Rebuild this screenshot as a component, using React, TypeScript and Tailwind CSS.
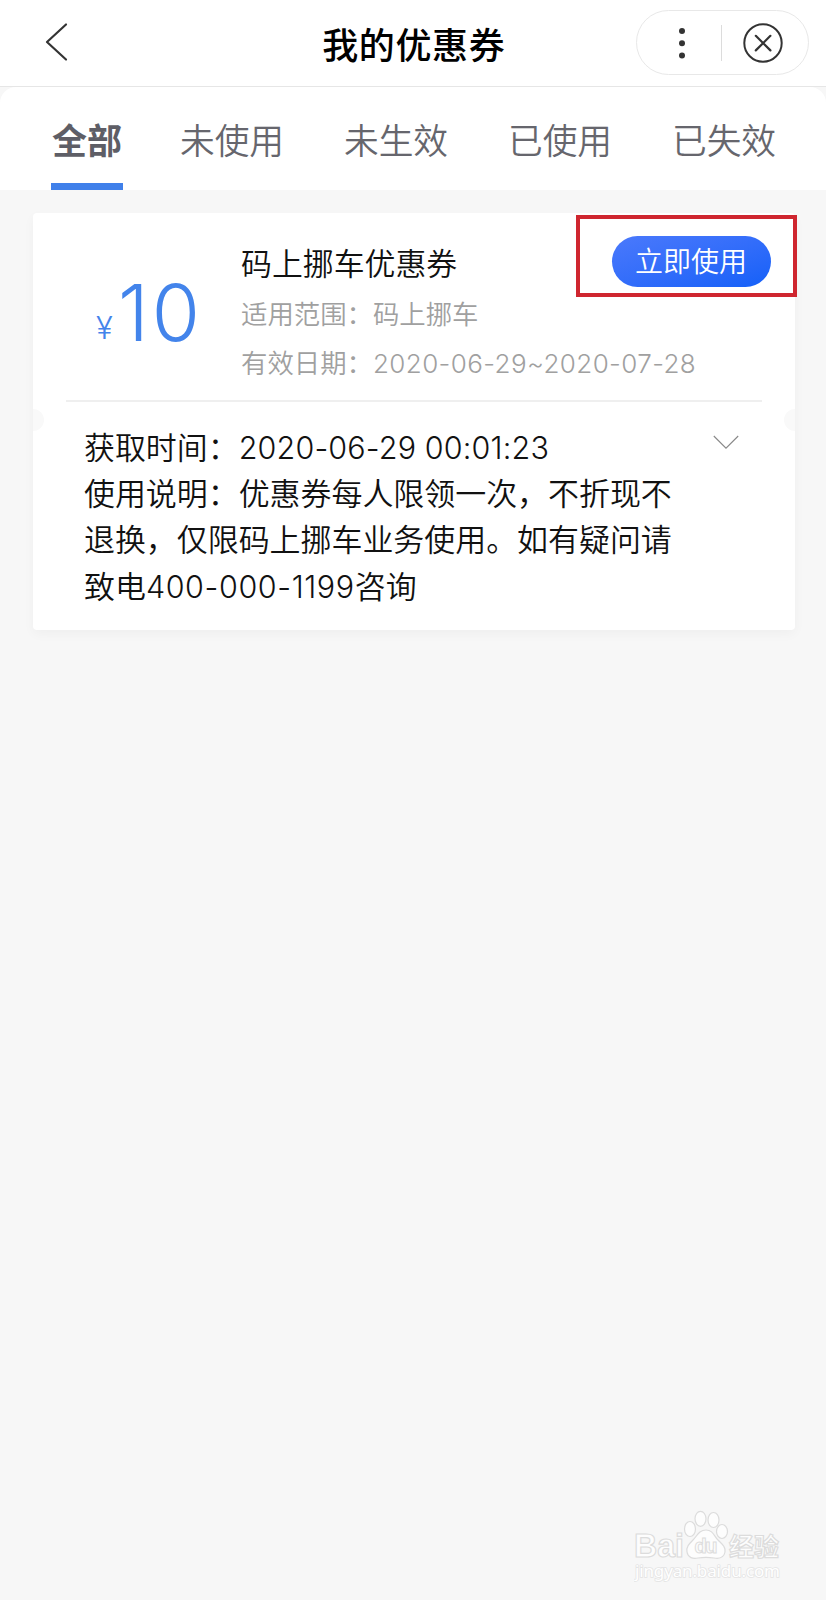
import React from "react";

const tabs = ["全部", "未使用", "未生效", "已使用", "已失效"];

function Latin({ children, className = "" }: { children: React.ReactNode; className?: string }) {
  return <span className={`font-['Inter','Noto_Sans_CJK_SC',sans-serif] ${className}`}>{children}</span>;
}

function Header() {
  return (
    <header className="grid h-[87px] grid-cols-[1fr_auto_1fr] items-center border-b border-[#e6e6e6] bg-white">
      <button aria-label="返回" className="ml-[45px] mb-[3px] w-6">
        <svg width="24" height="40" viewBox="0 0 24 40" fill="none" stroke="#333" strokeWidth="2.2" strokeLinecap="round" strokeLinejoin="round">
          <path d="M21 2.500 2 20 21 37.500" />
        </svg>
      </button>
      <h1 className="pl-[1.500px] text-[36px] font-medium leading-[44px] tracking-[0.600px] text-black">我的优惠券</h1>
      <div className="mb-[1px] mr-[17px] flex h-[65px] w-[173px] items-center justify-self-end rounded-full border border-[#e8e8e8]">
        <button aria-label="更多" className="ml-[39px] flex w-3 justify-center">
          <svg width="8" height="32" viewBox="0 0 8 32" fill="#333">
            <circle cx="4" cy="4" r="3" />
            <circle cx="4" cy="16.200" r="3" />
            <circle cx="4" cy="28.400" r="3" />
          </svg>
        </button>
        <div className="ml-[33px] h-9 w-px bg-[#dcdcdc]" />
        <button aria-label="关闭" className="ml-[20px]">
          <svg width="42" height="42" viewBox="0 0 42 42" fill="none" stroke="#333" strokeWidth="2" strokeLinecap="round">
            <circle cx="21" cy="21" r="18.700" />
            <path d="m13.800 13.800 14.600 14.600M28.400 13.800 13.800 28.400" strokeWidth="2.200" />
          </svg>
        </button>
      </div>
    </header>
  );
}

function Coupon() {
  return (
    <section className="relative ml-[33px] mt-[23px] h-[417px] w-[762px] rounded-[4px] bg-white shadow-[0_4px_12px_rgba(0,0,0,0.035)]">
      <div className="mx-[33px] flex h-[189px] border-b-2 border-[#efefef]">
        <div className="flex w-[142px] items-baseline pl-[30px] pt-[50px] text-[#4384eb]">
          <span className="relative top-[-2px] w-[22px] font-['Inter',sans-serif] text-[31px] font-light">¥</span>
          <Latin className="text-[78px] font-[350] leading-[100px] tracking-[3px]">10</Latin>
        </div>
        <div className="ml-[33px] pt-[26px] font-[350]">
          <h2 className="text-[30.900px] leading-[46px] text-[#111]">码上挪车优惠券</h2>
          <p className="mt-[3px] text-[26.400px] leading-[49px] text-[#a0a0a0]">适用范围：码上挪车</p>
          <p className="whitespace-nowrap text-[26.400px] leading-[49px] text-[#a0a0a0]">
            有效日期：<Latin className="text-[26px] font-[350] leading-none tracking-[0.400px]">2020-06-29~2020-07-28</Latin>
          </p>
        </div>
      </div>
      <div className="absolute right-[-2px] top-[2px] flex h-[82px] w-[221px] items-start justify-center border-4 border-[#cf262f] pl-[9px] pt-[17px]">
        <button className="h-[51px] w-[159px] rounded-full bg-linear-to-br from-[#4a79fc] to-[#1260f8] pb-[3px] text-[28px] font-[350] leading-[46px] text-white">立即使用</button>
      </div>
      <div className="absolute inset-x-0 top-[196px] flex h-[22px] justify-between overflow-hidden">
        <i className="h-[22px] w-[11px] rounded-r-full bg-[#f9f9f9]" />
        <i className="h-[22px] w-[11px] rounded-l-full bg-[#f9f9f9]" />
      </div>
      <div className="flex items-start pl-[51px] pt-[21px]">
        <div className="whitespace-nowrap text-[30.950px] font-[350] leading-[46.200px] text-[#111]">
          <p>获取时间：<Latin className="text-[30.500px] font-[350] leading-none tracking-[0.150px]">2020-06-29 00:01:23</Latin></p>
          <p>使用说明：优惠券每人限领一次，不折现不</p>
          <p>退换，仅限码上挪车业务使用。如有疑问请</p>
          <p>致电<Latin className="text-[30.500px] font-[350] leading-none tracking-[0.600px]">400-000-1199</Latin>咨询</p>
        </div>
        <svg className="ml-[41px] mt-[12px]" width="26" height="15" viewBox="0 0 26 15" fill="none" stroke="#888" strokeWidth="1.1">
          <path d="m.8 1 12.200 12.200L25.200 1" />
        </svg>
      </div>
    </section>
  );
}

function Watermark() {
  return (
    <svg className="absolute bottom-[10px] right-[12px]" width="180" height="80" viewBox="0 0 180 80" fill="#fdfdfd" stroke="#dcdcdc" strokeWidth="1.2">
      <text x="0" y="47" fontFamily="Liberation Sans, sans-serif" fontSize="34" fontWeight="700" textLength="50" lengthAdjust="spacingAndGlyphs">Bai</text>
      <ellipse cx="56" cy="19" rx="5.500" ry="7.500" />
      <ellipse cx="66.500" cy="8.800" rx="5.500" ry="7.500" />
      <ellipse cx="79.500" cy="10" rx="5.500" ry="7.500" />
      <ellipse cx="88" cy="21.500" rx="5.500" ry="7" />
      <path d="M72 20c-7 0-9 6-13 10-4 4-7 7-6 12 1 6 6 7 11 6 6-1 10-1 16 0 6 1 10-1 11-6 1-5-3-8-7-12-4-4-5-10-12-10Z" />
      <text x="60.500" y="43" fontFamily="Liberation Sans, sans-serif" fontSize="20" fontWeight="700" strokeWidth="1" textLength="23">du</text>
      <text x="95" y="45.500" fontFamily="Noto Sans CJK SC, sans-serif" fontSize="25" fontWeight="700">经验</text>
      <text x="1" y="67" fontFamily="Noto Sans, sans-serif" fontSize="17" fill="#fff" stroke="#e4e4e4" strokeWidth="1.600" paintOrder="stroke" textLength="145">jingyan.baidu.com</text>
    </svg>
  );
}

export default function App() {
  return (
    <div className="relative h-[1600px] w-[826px] overflow-hidden bg-[#f7f7f7] font-['Noto_Sans_CJK_SC',sans-serif]">
      <Header />
      <nav className="flex h-[103px] gap-[54px] rounded-t-[16px] bg-white pl-[51px]">
        {tabs.map((tab, index) => (
          <button
            key={tab}
            className={
              index === 0
                ? "w-[72px] shrink-0 whitespace-nowrap border-b-[7px] border-[#4080ea] pt-[6px] text-[35px] font-bold leading-[89px] text-[#5e5e66]"
                : "w-[110px] shrink-0 whitespace-nowrap border-b-[7px] border-transparent pt-[8px] text-[34.700px] font-[350] leading-[88px] text-[#66666d]"
            }
          >
            {tab}
          </button>
        ))}
      </nav>
      <Coupon />
      <Watermark />
    </div>
  );
}
